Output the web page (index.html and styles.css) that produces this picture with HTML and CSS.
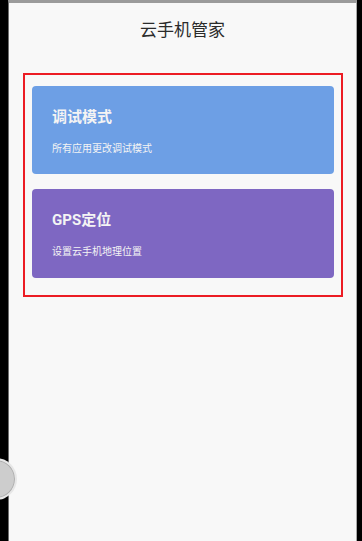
FILE: index.html
```html
<!DOCTYPE html>
<html lang="zh">
<head>
    <meta charset="UTF-8">
    <meta name="viewport" content="width=device-width, initial-scale=1.0">
    <title>云手机管家</title>
    <link rel="stylesheet" href="styles.css">
</head>
<body>
    <div class="screen">
        <h2 class="title">云手机管家</h2>
        <div class="panel">
            <div class="card card-debug">
                <p class="card-title">调试模式</p>
                <p class="card-desc">所有应用更改调试模式</p>
            </div>
            <div class="card card-gps">
                <p class="card-title">GPS定位</p>
                <p class="card-desc">设置云手机地理位置</p>
            </div>
        </div>
    </div>
    <!-- 悬浮按钮 -->
    <div class="float-ball"></div>
</body>
</html>
```

FILE: styles.css
```css
body {
    margin: 0;
    background: #000;
    font-family: Roboto, "Noto Sans CJK SC", sans-serif;
    height: 541px;
    overflow: hidden;
}
.screen {
    margin-left: 8px;
    width: 347px;
    height: 538px;
    background: #f8f8f8;
    border-top: 3px solid #9b9b9b;
    border-left: 1px solid #6e6e6e;
    border-right: 1px solid #a8a8a8;
}
.title {
    margin: 15px 0 0;
    font-size: 17px;
    font-weight: normal;
    line-height: 24px;
    text-align: center;
    color: #2b2b2b;
}
.panel {
    margin: 31px 0 0 14px;
    width: 302px;
    padding: 11px 7px 17px;
    border: 2px solid #ec1c24;
}
.card {
    height: 88px;
    padding: 0 20px;
    border-radius: 4px;
    color: #f4f4f4;
    overflow: hidden;
}
.card + .card {
    margin-top: 15px;
    height: 89px;
}
.card-debug {
    background: #6d9fe5;
}
.card-gps {
    background: #7e67c2;
}
.card-title {
    margin: 21px 0 0;
    font-size: 15px;
    font-weight: bold;
    line-height: 20px;
}
.card-desc {
    margin: 15px 0 0;
    font-size: 10px;
    line-height: 14px;
}
.float-ball {
    position: absolute;
    left: -25px;
    top: 458px;
    width: 38px;
    height: 38px;
    border-radius: 50%;
    background: #cdcdcd;
    border: 2px solid rgba(235, 235, 235, 0.85);
    box-shadow: inset 0 0 0 1px rgba(0, 0, 0, 0.15);
}
```
